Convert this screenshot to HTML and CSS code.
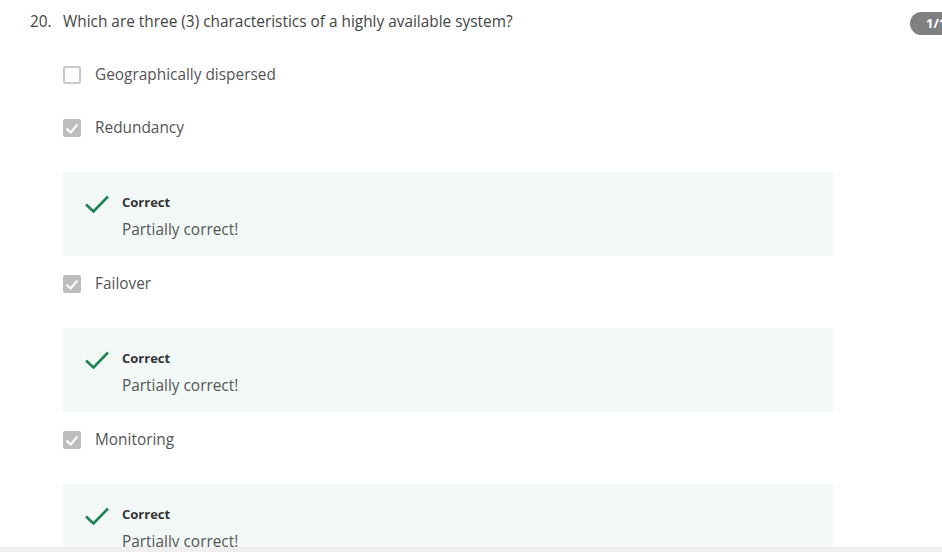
FILE: index.html
```html
<!DOCTYPE html>
<html lang="en">
<head>
<meta charset="utf-8">
<title>Quiz question</title>
<link rel="stylesheet" href="styles.css">
</head>
<body>
<div class="page">
  <div class="question">
    <span class="qnum">20.</span>
    <span class="qtext">Which are three (3) characteristics of a highly available system?</span>
  </div>
  <span class="badge">1/1 point</span>

  <div class="choices">
    <div class="choice">
      <span class="box"></span>
      <span class="label">Geographically dispersed</span>
    </div>

    <div class="choice">
      <span class="box checked"><svg viewBox="0 0 18 18" width="18" height="18"><path d="M3.5 9.5 L7.5 13.5 L14.5 5.5" fill="none" stroke="#fff" stroke-width="2"/></svg></span>
      <span class="label">Redundancy</span>
    </div>
    <div class="feedback">
      <svg class="tick" viewBox="0 0 24 18" width="24" height="18"><path d="M1 9.5 L8.5 16.5 L23 1.5" fill="none" stroke="#1f8354" stroke-width="2.6"/></svg>
      <div class="fb-text">
        <div class="fb-title">Correct</div>
        <div class="fb-body">Partially correct!</div>
      </div>
    </div>

    <div class="choice">
      <span class="box checked"><svg viewBox="0 0 18 18" width="18" height="18"><path d="M3.5 9.5 L7.5 13.5 L14.5 5.5" fill="none" stroke="#fff" stroke-width="2"/></svg></span>
      <span class="label">Failover</span>
    </div>
    <div class="feedback">
      <svg class="tick" viewBox="0 0 24 18" width="24" height="18"><path d="M1 9.5 L8.5 16.5 L23 1.5" fill="none" stroke="#1f8354" stroke-width="2.6"/></svg>
      <div class="fb-text">
        <div class="fb-title">Correct</div>
        <div class="fb-body">Partially correct!</div>
      </div>
    </div>

    <div class="choice">
      <span class="box checked"><svg viewBox="0 0 18 18" width="18" height="18"><path d="M3.5 9.5 L7.5 13.5 L14.5 5.5" fill="none" stroke="#fff" stroke-width="2"/></svg></span>
      <span class="label">Monitoring</span>
    </div>
    <div class="feedback">
      <svg class="tick" viewBox="0 0 24 18" width="24" height="18"><path d="M1 9.5 L8.5 16.5 L23 1.5" fill="none" stroke="#1f8354" stroke-width="2.6"/></svg>
      <div class="fb-text">
        <div class="fb-title">Correct</div>
        <div class="fb-body">Partially correct!</div>
      </div>
    </div>
  </div>
</div>
<div class="bottom-bar"></div>
</body>
</html>
```

FILE: styles.css
```css
html, body {
  margin: 0;
  padding: 0;
  background: #fff;
  overflow: hidden;
  width: 942px;
  height: 552px;
}

body {
  font-family: "Open Sans", "DejaVu Sans", sans-serif;
  font-size: 15.4px;
  color: #555;
}

.page {
  position: relative;
  padding: 12px 0 0 30px;
}

.question {
  display: flex;
  height: 20px;
  line-height: 20px;
  color: #444;
}

.qnum {
  width: 33px;
  flex: none;
}

.badge {
  position: absolute;
  left: 910px;
  top: 12px;
  height: 23px;
  line-height: 23px;
  border-radius: 11.5px;
  background: #808080;
  color: #fff;
  font-weight: 700;
  font-size: 13px;
  padding: 0 14px 0 16px;
  white-space: nowrap;
}

.choices {
  margin-left: 33px;
  margin-top: 33px;
  width: 770px;
}

.choice {
  display: flex;
  align-items: center;
  height: 20px;
  margin-bottom: 33px;
}

.box {
  width: 18px;
  height: 18px;
  box-sizing: border-box;
  border: 2px solid #c9c9c9;
  border-radius: 2px;
  flex: none;
  margin-right: 14px;
  position: relative;
}

.box.checked {
  background: #bdbdbd;
  border-color: #bdbdbd;
}

.box.checked svg {
  position: absolute;
  left: -2px;
  top: -2px;
}

.label {
  line-height: 20px;
  height: 20px;
  color: #555;
}

.feedback {
  display: flex;
  align-items: flex-start;
  background: #f2f8f6;
  margin-top: 34px;
  margin-bottom: 18px;
  padding: 21px 0 0 22px;
  height: 63px;
}

.tick {
  flex: none;
  margin-right: 13px;
  margin-top: 2px;
}

.fb-title {
  font-size: 13px;
  font-weight: 700;
  line-height: 18px;
  height: 18px;
  color: #333;
}

.fb-body {
  margin-top: 9px;
  line-height: 20px;
  height: 20px;
  color: #555;
}

.bottom-bar {
  position: fixed;
  left: 0;
  right: 0;
  bottom: 0;
  height: 5px;
  background: #efefef;
}
```
